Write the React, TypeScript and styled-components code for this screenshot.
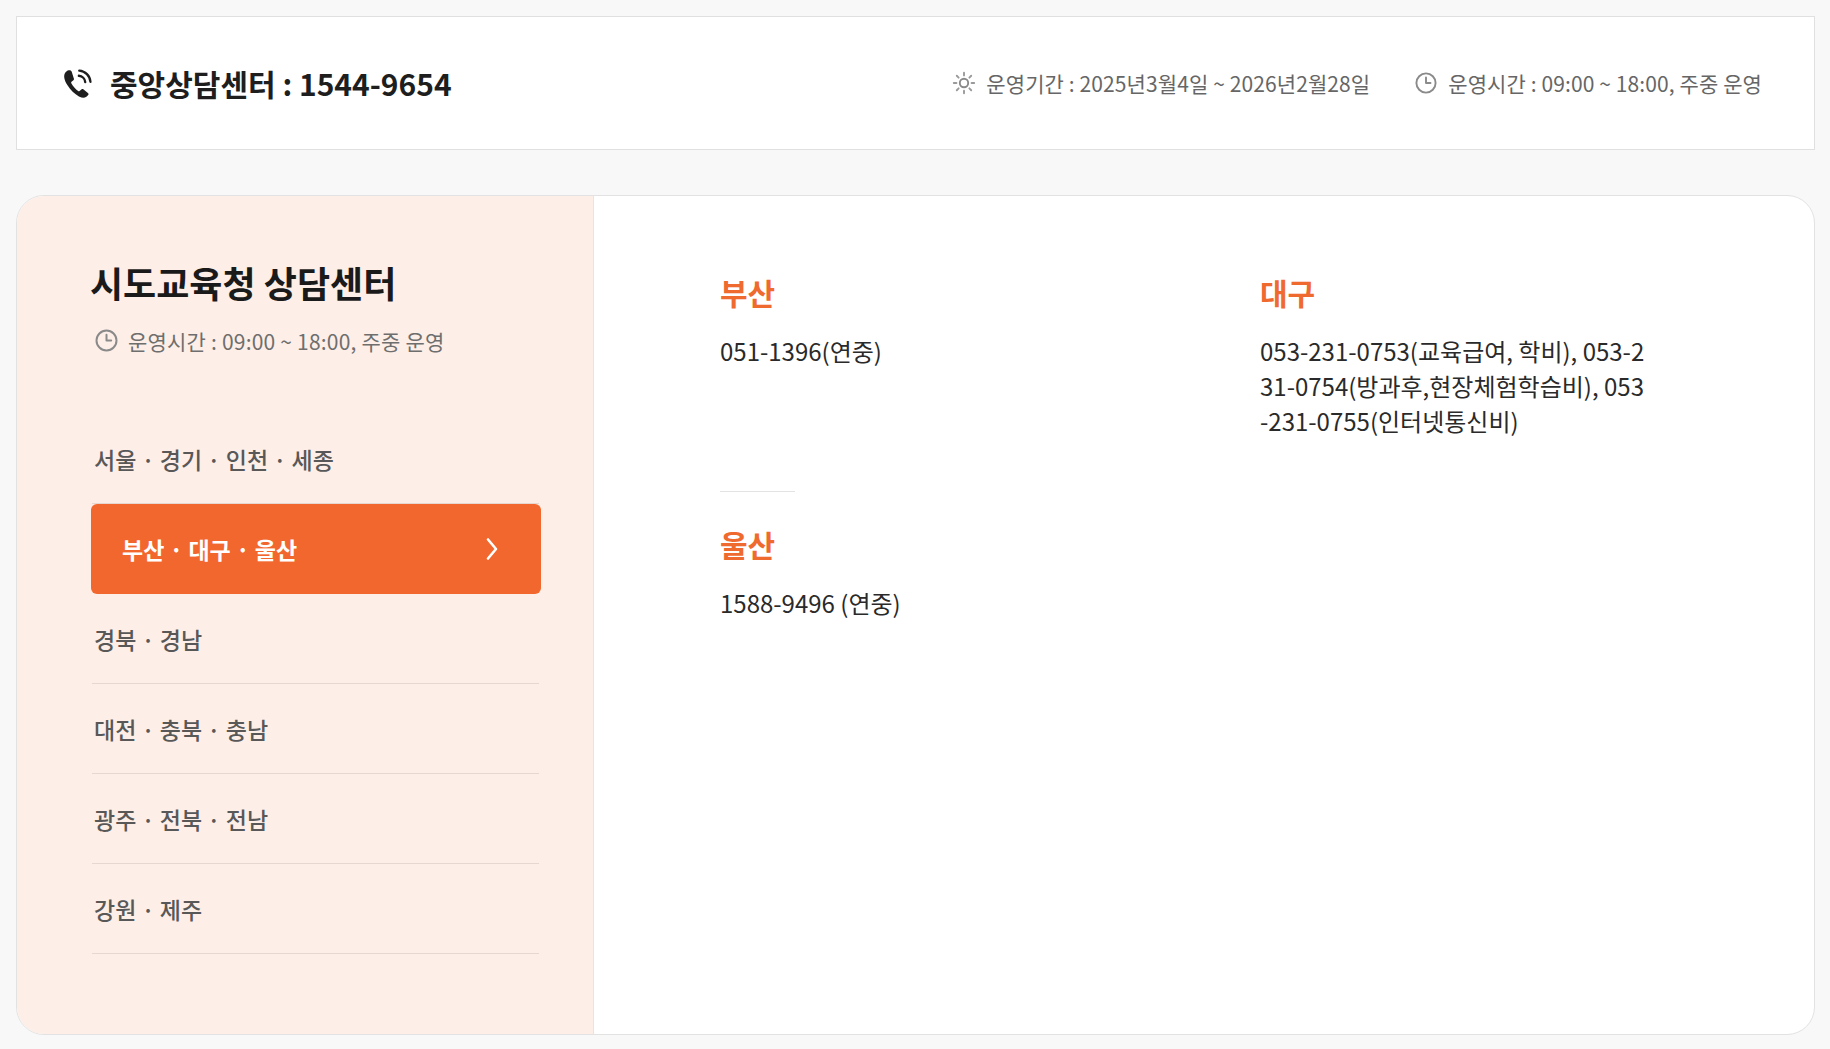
import React from "react";
import styled, { createGlobalStyle } from "styled-components";

const Global = createGlobalStyle`
  html, body { margin: 0; padding: 0; }
  body {
    background: #f8f8f8;
    font-family: "Noto Sans CJK KR", "Noto Sans", sans-serif;
    color: #222;
  }
  * { box-sizing: border-box; }
`;

const Page = styled.div`
  padding: 16px 15px 16px 16px;
  display: flex;
  flex-direction: column;
  gap: 45px;
`;

const TopBar = styled.header`
  height: 134px;
  background: #fff;
  border: 1px solid #e0e0e0;
  display: flex;
  align-items: center;
  justify-content: space-between;
  padding: 0 52px 0 44px;
`;

const CallCenter = styled.div`
  display: flex;
  align-items: center;
  gap: 15px;
  font-size: 30px;
  font-weight: 700;
  color: #1e1e1e;
`;

const InfoGroup = styled.div`
  display: flex;
  align-items: center;
  gap: 44px;
`;

const InfoItem = styled.div`
  display: flex;
  align-items: center;
  gap: 10px;
  font-size: 21px;
  color: #666;
  letter-spacing: 0.1px;
`;

const Card = styled.section`
  display: flex;
  background: #fff;
  border: 1px solid #e2e2e2;
  border-radius: 28px;
  overflow: hidden;
`;

const Side = styled.aside`
  width: 577px;
  flex: none;
  background: #fdeee7;
  border-right: 1px solid #eee2dc;
  padding: 65px 54px 80px 75px;
  display: flex;
  flex-direction: column;
`;

const SideTitle = styled.h2`
  margin: 0 0 0 -2px;
  font-size: 36px;
  line-height: 43px;
  font-weight: 700;
  color: #1a1a1a;
`;

const Hours = styled.div`
  margin-top: 24px;
  display: flex;
  align-items: center;
  gap: 9px;
  font-size: 21px;
  line-height: 24px;
  color: #6e6e6e;
  letter-spacing: 0.2px;
  padding-left: 2px;
`;

const Nav = styled.ul`
  list-style: none;
  margin: 61px 0 0;
  padding: 0;
`;

const NavItem = styled.li<{ $active?: boolean }>`
  height: 90px;
  display: flex;
  align-items: center;
  justify-content: space-between;
  font-size: 23px;
  ${(p) =>
    p.$active
      ? `
    background: #f2672d;
    color: #fff;
    font-weight: 700;
    border-radius: 6px;
    padding: 0 42px 0 31px;
    margin: 0 -2px 0 -1px;
  `
      : `
    color: #585858;
    font-weight: 500;
    border-bottom: 1px solid #e6d8d1;
    padding: 0 2px;
  `}
`;

const Content = styled.div`
  flex: 1;
  padding: 78px 60px 80px 126px;
  display: grid;
  grid-template-columns: 400px 389px;
  column-gap: 140px;
  row-gap: 53px;
  align-content: start;
`;

const Region = styled.div<{ $ruled?: boolean }>`
  position: relative;
  ${(p) =>
    p.$ruled
      ? `
    padding-top: 35px;
    &::before {
      content: "";
      position: absolute;
      top: 0;
      left: 0;
      width: 75px;
      height: 1px;
      background: #e3e3e3;
    }
  `
      : ""}
`;

const RegionName = styled.h3`
  margin: 0;
  font-size: 30px;
  line-height: 36px;
  font-weight: 700;
  color: #ef6a2f;
`;

const RegionTel = styled.p`
  margin: 23px 0 0;
  font-size: 24px;
  line-height: 35px;
  color: #2a2a2a;
  word-break: break-all;
`;

const PhoneIcon = () => (
  <svg width="34" height="34" viewBox="0 0 32 32" aria-hidden="true">
    <path
      d="M7.2 4c-1.2.3-2.6 1.3-3.4 2.6-1.5 2.5-.9 6.4 2 11.1 3.1 5 7 8.8 11.1 10.9 2.8 1.4 5 1.6 6.6.6 1-.6 2.1-1.6 2.4-2.3.2-.6 0-1.1-.6-1.6l-4-3.2c-.8-.6-1.4-.6-2.1-.1l-1.7 1.5c-.4.3-.9.3-1.4 0-2.4-1.6-4.9-4.5-6.4-7.3-.3-.5-.2-1 .2-1.300l1.8-1.5c.6-.5.7-1.1.3-1.8L10 5.2C9.4 4.2 8.4 3.7 7.2 4z"
      fill="#1e1e1e"
    />
    <path d="M16.8 9.2a6.5 6.5 0 0 1 6 6" stroke="#1e1e1e" strokeWidth="2.2" fill="none" strokeLinecap="round" />
    <path d="M17.2 4.3a11.3 11.3 0 0 1 10.5 10.5" stroke="#1e1e1e" strokeWidth="2.2" fill="none" strokeLinecap="round" />
  </svg>
);

const SunIcon = () => (
  <svg width="24" height="24" viewBox="0 0 24 24" aria-hidden="true">
    <circle cx="12" cy="12" r="4.2" fill="none" stroke="#8a8a8a" strokeWidth="1.9" />
    {[0, 45, 90, 135, 180, 225, 270, 315].map((a) => (
      <line
        key={a}
        x1="12"
        y1="1.8"
        x2="12"
        y2="4.4"
        stroke="#9a9a9a"
        strokeWidth="1.9"
        strokeLinecap="round"
        transform={`rotate(${a} 12 12)`}
      />
    ))}
  </svg>
);

const ClockIcon = ({ size = 24 }: { size?: number }) => (
  <svg width={size} height={size} viewBox="0 0 24 24" aria-hidden="true">
    <circle cx="12" cy="12" r="9.6" fill="none" stroke="#8a8a8a" strokeWidth="1.9" />
    <path d="M12 6.5V12h4.5" fill="none" stroke="#8a8a8a" strokeWidth="1.9" strokeLinecap="round" strokeLinejoin="round" />
  </svg>
);

const Chevron = () => (
  <svg width="14" height="26" viewBox="0 0 14 26" aria-hidden="true">
    <path d="M3 3.5l8 9.5-8 9.5" fill="none" stroke="#fff" strokeWidth="2.6" strokeLinecap="round" strokeLinejoin="round" />
  </svg>
);

const regionsNav = [
  "서울 · 경기 · 인천 · 세종",
  "부산 · 대구 · 울산",
  "경북 · 경남",
  "대전 · 충북 · 충남",
  "광주 · 전북 · 전남",
  "강원 · 제주",
];

const offices = [
  { name: "부산", tel: "051-1396(연중)" },
  {
    name: "대구",
    tel: "053-231-0753(교육급여, 학비), 053-231-0754(방과후,현장체험학습비), 053-231-0755(인터넷통신비)",
  },
  { name: "울산", tel: "1588-9496 (연중)" },
];

export default function App() {
  return (
    <>
      <Global />
      <Page>
        <TopBar>
          <CallCenter>
            <PhoneIcon />
            <span>중앙상담센터 : 1544-9654</span>
          </CallCenter>
          <InfoGroup>
            <InfoItem>
              <SunIcon />
              <span>운영기간 : 2025년3월4일 ~ 2026년2월28일</span>
            </InfoItem>
            <InfoItem>
              <ClockIcon />
              <span>운영시간 : 09:00 ~ 18:00, 주중 운영</span>
            </InfoItem>
          </InfoGroup>
        </TopBar>
        <Card>
          <Side>
            <SideTitle>시도교육청 상담센터</SideTitle>
            <Hours>
              <ClockIcon size={25} />
              <span>운영시간 : 09:00 ~ 18:00, 주중 운영</span>
            </Hours>
            <Nav>
              {regionsNav.map((r, i) => (
                <NavItem key={r} $active={i === 1}>
                  <span>{r}</span>
                  {i === 1 && <Chevron />}
                </NavItem>
              ))}
            </Nav>
          </Side>
          <Content>
            {offices.map((o, i) => (
              <Region key={o.name} $ruled={i >= 2}>
                <RegionName>{o.name}</RegionName>
                <RegionTel>{o.tel}</RegionTel>
              </Region>
            ))}
          </Content>
        </Card>
      </Page>
    </>
  );
}
